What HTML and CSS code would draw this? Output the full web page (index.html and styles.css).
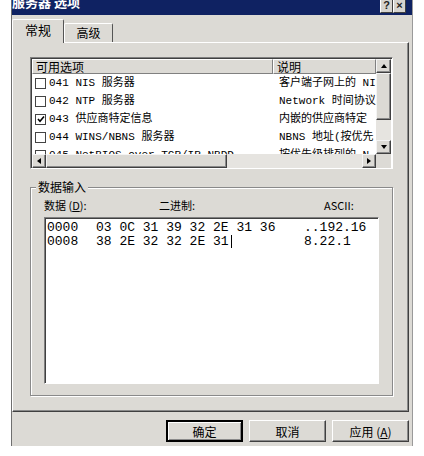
FILE: index.html
```html
<!DOCTYPE html>
<html lang="zh-CN">
  <head>
    <meta charset="UTF-8" />
    <title>服务器 选项</title>
    <link rel="stylesheet" href="styles.css">
  </head>
  <body>
    <div class="window">
      <div class="titlebar">
        <span class="title">服务器 选项</span>
        <div class="caption-buttons">
          <span class="cap-btn">?</span>
          <span class="cap-btn">×</span>
        </div>
      </div>

      <div class="tabs">
        <span class="tab active">常规</span>
        <span class="tab">高级</span>
      </div>

      <div class="panel">
        <div class="listbox">
          <div class="list-view">
            <div class="list-head">
              <span class="col-name">可用选项</span>
              <span class="col-desc">说明</span>
            </div>
            <div class="list-row">
              <span class="col-name"><span class="check"></span>041 NIS 服务器</span>
              <span class="col-desc">客户端子网上的 NIS</span>
            </div>
            <div class="list-row">
              <span class="col-name"><span class="check"></span>042 NTP 服务器</span>
              <span class="col-desc">Network 时间协议</span>
            </div>
            <div class="list-row">
              <span class="col-name">
                <span class="check">
                  <svg width="8" height="8" viewBox="0 0 8 8"><path d="M1 4 L3 6.2 L7 1.5" fill="none" stroke="#000" stroke-width="1.6"/></svg>
                </span>043 供应商特定信息
              </span>
              <span class="col-desc">内嵌的供应商特定</span>
            </div>
            <div class="list-row">
              <span class="col-name"><span class="check"></span>044 WINS/NBNS 服务器</span>
              <span class="col-desc">NBNS 地址(按优先</span>
            </div>
            <div class="list-row">
              <span class="col-name"><span class="check"></span>045 NetBIOS over TCP/IP NBDD</span>
              <span class="col-desc">按优先级排列的 N</span>
            </div>
          </div>

          <div class="vscroll">
            <span class="sbtn"><span class="arrow up"></span></span>
            <span class="thumb v"></span>
            <span class="track"></span>
            <span class="sbtn"><span class="arrow down"></span></span>
          </div>

          <div class="hscroll">
            <span class="sbtn"><span class="arrow left"></span></span>
            <span class="thumb h"></span>
            <span class="track"></span>
            <span class="sbtn"><span class="arrow right"></span></span>
          </div>

          <div class="corner"></div>
        </div>

        <fieldset class="group">
          <legend>数据输入</legend>
          <div class="data-labels">
            <span>数据 (<u>D</u>):</span>
            <span>二进制:</span>
            <span>ASCII:</span>
          </div>
          <div class="data-box">
            <div class="data-line">
              <span class="offset">0000</span>
              <span class="hex">03 0C 31 39 32 2E 31 36</span>
              <span class="ascii">..192.16</span>
            </div>
            <div class="data-line">
              <span class="offset">0008</span>
              <span class="hex">38 2E 32 32 2E 31<span class="caret"></span></span>
              <span class="ascii">8.22.1</span>
            </div>
          </div>
        </fieldset>
      </div>

      <div class="buttons">
        <button class="default">确定</button>
        <button>取消</button>
        <button>应用 (<u>A</u>)</button>
      </div>
    </div>
  </body>
</html>
```

FILE: styles.css
```css
body {
  margin: 0;
  background: #fff;
  font-family: "Noto Sans CJK SC", sans-serif;
  font-size: 12px;
  color: #000;
}

.window {
  margin-left: 11px;
  width: 400px;
  height: 446px;
  background: #dcdad5;
  border-left: 1px solid #6f6f6f;
  border-right: 1px solid #9a9a9a;
  display: flex;
  flex-direction: column;
}

/* title bar */

.titlebar {
  height: 15px;
  background: #0f2262;
  display: flex;
  justify-content: space-between;
  padding-right: 6px;
  overflow: hidden;
}

.title {
  color: #fff;
  font-weight: bold;
  font-size: 13px;
  line-height: 15px;
  margin-top: -6px;
}

.caption-buttons {
  display: flex;
}

.cap-btn {
  width: 11px;
  height: 12px;
  background: #d6d4cf;
  border: 1px solid;
  border-color: #fff #404040 #404040 #fff;
  font: bold 11px/11px "Liberation Sans", sans-serif;
  text-align: center;
  color: #222;
  margin-top: -1px;
}

/* tabs */

.tabs {
  height: 28px;
  margin-bottom: -1px;
  display: flex;
  align-items: flex-end;
}

.tab {
  height: 19px;
  width: 49px;
  margin-bottom: 1px;
  border: 1px solid;
  border-color: #fff #555 transparent #fff;
  border-bottom: none;
  border-radius: 2px 2px 0 0;
  line-height: 18px;
  text-align: center;
  box-sizing: border-box;
  background: #dcdad5;
}

.tab.active {
  position: relative;
  z-index: 1;
  width: 52px;
  height: 24px;
  margin-bottom: 0;
  line-height: 20px;
  font-size: 13px;
}

/* tab panel */

.panel {
  height: 370px;
  margin-right: 3px;
  box-sizing: border-box;
  border: 1px solid;
  border-color: #fff #404040 #404040 #fff;
  box-shadow: inset -1px -1px 0 #8a8a8a;
  padding: 14px 14px 0 17px;
}

/* list view */

.listbox {
  width: 363px;
  height: 112px;
  box-sizing: border-box;
  border: 1px solid;
  border-color: #808080 #fff #fff #808080;
  box-shadow: inset 1px 1px 0 #404040;
  padding: 1px 1px 0 1px;
  background: #fff;
  display: grid;
  grid-template-columns: 1fr 15px;
  grid-template-rows: 1fr 14px;
}

.list-view {
  overflow: hidden;
  font-family: "Liberation Mono", "Noto Sans CJK SC", monospace;
  font-size: 11px;
}

.list-head,
.list-row {
  display: flex;
  white-space: nowrap;
}

.list-head {
  height: 15px;
  background: #dcdad5;
  font-family: "Noto Sans CJK SC", sans-serif;
  font-size: 12px;
  line-height: 14px;
}

.list-head span {
  box-sizing: border-box;
  border: 1px solid;
  border-color: #fff #808080 #808080 #fff;
  padding-left: 3px;
}

.col-name {
  width: 241px;
  flex: none;
  display: flex;
  align-items: center;
}

.col-desc {
  flex: 1;
  overflow: hidden;
}

.list-row {
  height: 18px;
  line-height: 18px;
}

.list-row .col-name {
  padding-left: 3px;
  box-sizing: border-box;
}

.list-row .col-desc {
  padding-left: 6px;
}

.check {
  width: 9px;
  height: 9px;
  border: 1px solid #444;
  background: #fff;
  margin-right: 3px;
  display: flex;
  align-items: center;
  justify-content: center;
}

/* scroll bars */

.vscroll,
.hscroll {
  display: flex;
  background: #e6e4e0;
}

.vscroll {
  flex-direction: column;
}

.sbtn,
.thumb,
.corner {
  background: #dcdad5;
  box-sizing: border-box;
}

.sbtn,
.thumb {
  border: 1px solid;
  border-color: #f4f4f4 #404040 #404040 #f4f4f4;
  box-shadow: inset -1px -1px 0 #8a8a8a;
  display: flex;
  align-items: center;
  justify-content: center;
}

.vscroll .sbtn {
  height: 14px;
}

.hscroll .sbtn {
  width: 14px;
}

.thumb.v {
  height: 47px;
}

.thumb.h {
  width: 181px;
}

.track {
  flex: 1;
}

.arrow {
  width: 0;
  height: 0;
  border: 3px solid transparent;
}

.arrow.up {
  border-bottom: 4px solid #000;
  border-top: none;
}

.arrow.down {
  border-top: 4px solid #000;
  border-bottom: none;
}

.arrow.left {
  border-right: 4px solid #000;
  border-left: none;
}

.arrow.right {
  border-left: 4px solid #000;
  border-right: none;
}

/* data entry group */

.group {
  width: 363px;
  margin: 11px 0 0 0;
  padding: 4px 13px 0 13px;
  box-sizing: border-box;
  border: 1px solid #8a8a8a;
  box-shadow: inset 1px 1px 0 #fff, 1px 1px 0 #fff;
  min-width: 0;
}

.group legend {
  padding: 0 2px;
  margin-left: -8px;
  line-height: 14px;
  font-size: 12px;
  background: #dcdad5;
}

.data-labels {
  display: grid;
  grid-template-columns: 115px 165px auto;
  height: 14px;
  line-height: 14px;
  font-size: 11px;
}

.data-box {
  height: 167px;
  margin-top: 5px;
  margin-bottom: 11px;
  box-sizing: border-box;
  border: 1px solid;
  border-color: #808080 #fff #fff #808080;
  box-shadow: inset 1px 1px 0 #404040;
  background: #fff;
  padding: 3px 0 0 2px;
  font-family: "Liberation Mono", monospace;
  font-size: 13px;
  line-height: 14px;
}

.data-line {
  display: flex;
  white-space: pre;
}

.offset {
  width: 49px;
}

.hex {
  width: 208px;
  display: flex;
}

.caret {
  width: 1px;
  height: 13px;
  background: #000;
  margin-left: 2px;
}

/* dialog buttons */

.buttons {
  display: flex;
  justify-content: flex-end;
  gap: 6px;
  padding: 8px 3px 0 0;
}

button {
  width: 77px;
  height: 22px;
  font-family: "Noto Sans CJK SC", sans-serif;
  font-size: 12px;
  background: #dcdad5;
  border: 1px solid;
  border-color: #fff #404040 #404040 #fff;
  box-shadow: inset -1px -1px 0 #8a8a8a;
  padding: 0;
}

button.default {
  border: 2px solid #000;
  box-shadow: inset 1px 1px 0 #fff, inset -1px -1px 0 #8a8a8a;
}
```
